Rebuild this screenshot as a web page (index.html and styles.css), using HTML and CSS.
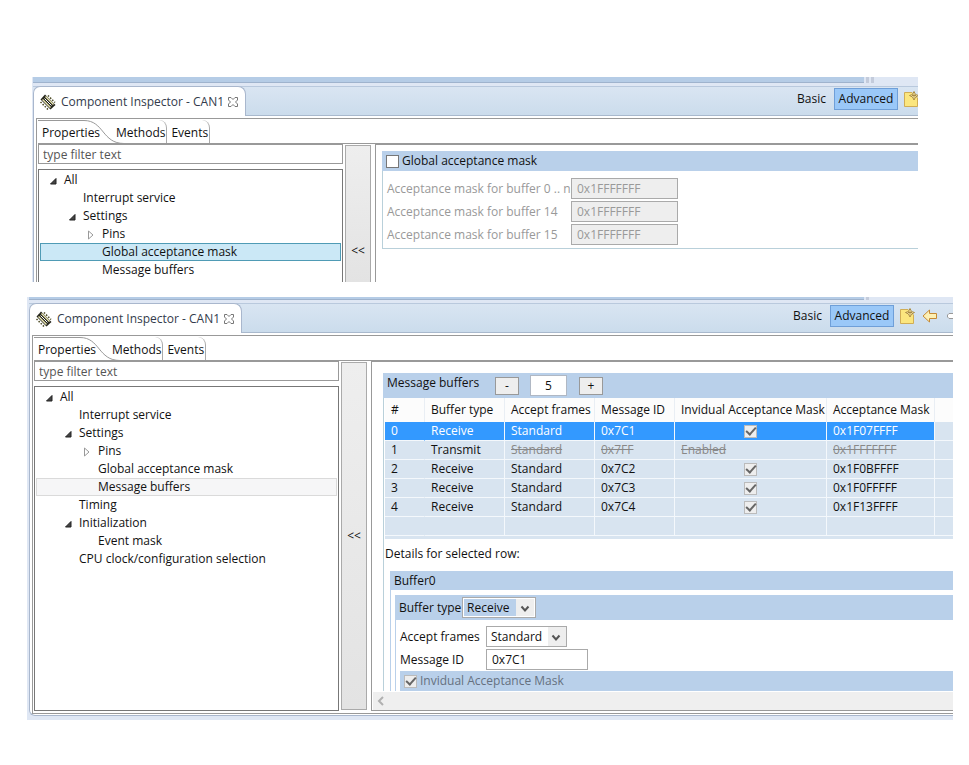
FILE: index.html
```html
<!DOCTYPE html>
<html lang="en">
<head>
  <meta charset="UTF-8">
  <meta name="viewport" content="width=device-width, initial-scale=1.0">
  <title>Component Inspector - CAN1</title>
  <link rel="stylesheet" href="styles.css">
</head>
<body>
  <svg class="defs" width="0" height="0">
    <symbol id="chip" viewBox="0 0 16 16">
      <path d="M0.500 5.500 5 0.500 15.500 11 10.500 15.500Z" fill="#26261c"/>
      <path d="M2.500 5.500 10.500 13.500M5.500 2.500 13.500 10.500" stroke="#e6e3b0" stroke-width="1.500"/>
      <path d="M4.500 4.500 11.500 11.500" stroke="#fff"/>
      <path d="M0.500 8 8 15.500M8 1.500 15 8.500" stroke="#4a4820" stroke-width="1.500" stroke-dasharray="1.500 1.500"/>
    </symbol>
    <symbol id="close" viewBox="0 0 12 12">
      <path d="M1.500 1.500H4L6 3.500 8 1.500H10.500V4L8.500 6 10.500 8V10.500H8L6 8.500 4 10.500H1.500V8L3.500 6 1.500 4Z" fill="#fff" stroke="#777"/>
    </symbol>
    <symbol id="note" viewBox="0 0 16 16">
      <path d="M1.500 1.500H9L14.500 7V15.500H1.500Z" fill="#fbe67e" stroke="#d0ad55"/>
      <path d="M11 0.500 12.500 3.500 15.500 4.500 12.500 6 11 9 9.500 6 6.500 4.500 9.500 3.500Z" fill="#fff3b0" stroke="#a98a44"/>
      <path d="M11 3V6.500M9 4.500H13" stroke="#a98a44"/>
    </symbol>
    <symbol id="back" viewBox="0 0 16 14">
      <path d="M1 7 7.500 1V4.500H14.500V9.500H7.500V13Z" fill="#fdf0b4" stroke="#c68a35"/>
    </symbol>
    <symbol id="open" viewBox="0 0 8 8">
      <path d="M7 1.500V7H1.500Z" fill="#444" stroke="#222"/>
    </symbol>
    <symbol id="closed" viewBox="0 0 8 10">
      <path d="M1.500 1 6 5 1.500 9Z" fill="#fff" stroke="#999"/>
    </symbol>
    <symbol id="chevron" viewBox="0 0 10 8">
      <path d="M1.500 1.500 5 5.500 8.500 1.500" fill="none" stroke="#555" stroke-width="2"/>
    </symbol>
    <symbol id="curve" viewBox="0 0 86 24">
      <path d="M0 0.500H46C66 0.500 64 23.500 86 23.500" fill="none" stroke="#999"/>
    </symbol>
  </svg>

  <main>
    <!-- acceptance mask page -->
    <section class="view view-mask">
      <div class="sash"><i></i><i></i></div>
      <header class="view-bar">
        <div class="view-tab">
          <svg class="chip"><use href="#chip"/></svg>
          <span>Component Inspector - CAN1</span>
          <svg class="close"><use href="#close"/></svg>
        </div>
        <div class="toolbar">
          <button class="mode">Basic</button>
          <button class="mode active">Advanced</button>
          <svg class="note"><use href="#note"/></svg>
        </div>
      </header>
      <div class="view-body">
        <div class="frame">
          <nav class="tabs">
            <button class="tab first">Properties<svg class="curve"><use href="#curve"/></svg></button>
            <button class="tab methods">Methods</button>
            <button class="tab">Events</button>
          </nav>
          <div class="work">
            <div class="side">
              <input class="filter" type="text" placeholder="type filter text" aria-label="Filter">
              <ul class="tree">
                <li><svg class="arrow"><use href="#open"/></svg>All</li>
                <li class="l2">Interrupt service</li>
                <li class="l2"><svg class="arrow"><use href="#open"/></svg>Settings</li>
                <li class="l3"><svg class="arrow closed"><use href="#closed"/></svg>Pins</li>
                <li class="l3 selected">Global acceptance mask</li>
                <li class="l3">Message buffers</li>
              </ul>
            </div>
            <button class="collapse">&lt;&lt;</button>
            <div class="pane">
              <div class="mask-form">
                <div class="bar"><input type="checkbox" id="gmask"><label for="gmask">Global acceptance mask</label></div>
                <div class="mask-grid">
                  <label for="m0">Acceptance mask for buffer 0 .. n</label><input id="m0" class="box" type="text" value="0x1FFFFFFF" disabled>
                  <label for="m14">Acceptance mask for buffer 14</label><input id="m14" class="box" type="text" value="0x1FFFFFFF" disabled>
                  <label for="m15">Acceptance mask for buffer 15</label><input id="m15" class="box" type="text" value="0x1FFFFFFF" disabled>
                </div>
              </div>
            </div>
          </div>
        </div>
      </div>
    </section>

    <!-- message buffers page -->
    <section class="view view-buffers">
      <div class="sash"><i></i></div>
      <header class="view-bar">
        <div class="view-tab">
          <svg class="chip"><use href="#chip"/></svg>
          <span>Component Inspector - CAN1</span>
          <svg class="close"><use href="#close"/></svg>
        </div>
        <div class="toolbar">
          <button class="mode">Basic</button>
          <button class="mode active">Advanced</button>
          <svg class="note"><use href="#note"/></svg>
          <svg class="back"><use href="#back"/></svg>
          <svg class="forward" viewBox="0 0 6 14"><path d="M7 4.500H2L0.500 6V8L2 9.500H7" fill="#fff" stroke="#999"/></svg>
        </div>
      </header>
      <div class="view-body">
        <div class="frame">
          <nav class="tabs">
            <button class="tab first">Properties<svg class="curve"><use href="#curve"/></svg></button>
            <button class="tab methods">Methods</button>
            <button class="tab">Events</button>
          </nav>
          <div class="work">
            <div class="side">
              <input class="filter" type="text" placeholder="type filter text" aria-label="Filter">
              <ul class="tree">
                <li><svg class="arrow"><use href="#open"/></svg>All</li>
                <li class="l2">Interrupt service</li>
                <li class="l2"><svg class="arrow"><use href="#open"/></svg>Settings</li>
                <li class="l3"><svg class="arrow closed"><use href="#closed"/></svg>Pins</li>
                <li class="l3">Global acceptance mask</li>
                <li class="l3 inactive">Message buffers</li>
                <li class="l2">Timing</li>
                <li class="l2"><svg class="arrow"><use href="#open"/></svg>Initialization</li>
                <li class="l3">Event mask</li>
                <li class="l2">CPU clock/configuration selection</li>
              </ul>
            </div>
            <button class="collapse">&lt;&lt;</button>
            <div class="pane">
              <div class="buffers">
                <div class="bar count">
                  <label for="count">Message buffers</label>
                  <button class="step">-</button>
                  <input id="count" type="text" value="5">
                  <button class="step">+</button>
                </div>
                <table>
                  <colgroup><col class="c-num"><col class="c-type"><col class="c-frames"><col class="c-id"><col class="c-ind"><col class="c-mask"><col></colgroup>
                  <thead>
                    <tr><th>#</th><th>Buffer type</th><th>Accept frames</th><th>Message ID</th><th>Invidual Acceptance Mask</th><th>Acceptance Mask</th><th></th></tr>
                  </thead>
                  <tbody>
                    <tr class="current"><td>0</td><td>Receive</td><td>Standard</td><td>0x7C1</td><td class="tick"><input type="checkbox" aria-label="Mask 0" checked disabled></td><td>0x1F07FFFF</td><td></td></tr>
                    <tr><td>1</td><td>Transmit</td><td><s>Standard</s></td><td><s>0x7FF</s></td><td><s>Enabled</s></td><td><s>0x1FFFFFFF</s></td><td></td></tr>
                    <tr><td>2</td><td>Receive</td><td>Standard</td><td>0x7C2</td><td class="tick"><input type="checkbox" aria-label="Mask 2" checked disabled></td><td>0x1F0BFFFF</td><td></td></tr>
                    <tr><td>3</td><td>Receive</td><td>Standard</td><td>0x7C3</td><td class="tick"><input type="checkbox" aria-label="Mask 3" checked disabled></td><td>0x1F0FFFFF</td><td></td></tr>
                    <tr><td>4</td><td>Receive</td><td>Standard</td><td>0x7C4</td><td class="tick"><input type="checkbox" aria-label="Mask 4" checked disabled></td><td>0x1F13FFFF</td><td></td></tr>
                    <tr><td></td><td></td><td></td><td></td><td></td><td></td><td></td></tr>
                  </tbody>
                </table>
                <div class="table-end"></div>
                <p class="details">Details for selected row:</p>
                <div class="group">
                  <div class="bar">Buffer0</div>
                  <div class="group-inner">
                    <div class="bar type">
                      <label for="btype">Buffer type</label>
                      <span class="combo focused"><select id="btype"><option>Receive</option><option>Transmit</option></select><svg><use href="#chevron"/></svg></span>
                    </div>
                    <div class="fields">
                      <label for="frames">Accept frames</label>
                      <span class="combo"><select id="frames"><option>Standard</option><option>Extended</option></select><svg><use href="#chevron"/></svg></span>
                      <label for="mid">Message ID</label>
                      <input id="mid" class="box" type="text" value="0x7C1">
                    </div>
                    <div class="bar individual"><input type="checkbox" id="ind" checked disabled><label for="ind">Invidual Acceptance Mask</label></div>
                  </div>
                </div>
              </div>
              <div class="scroll"><svg viewBox="0 0 8 10"><path d="M6 1 2 5 6 9" fill="none" stroke="#b0b0b0" stroke-width="2"/></svg></div>
            </div>
          </div>
        </div>
      </div>
    </section>
  </main>
</body>
</html>
```
FILE: styles.css
```css
* {
  margin: 0;
  padding: 0;
  box-sizing: border-box;
}

body {
  background: #fff;
  color: #111;
  font: 12px/18px "Open Sans", "Noto Sans", sans-serif;
}

input, select, button {
  font: inherit;
  color: inherit;
  border-radius: 0;
}

button {
  border: none;
  background: none;
  white-space: nowrap;
}

.defs {
  position: absolute;
}

svg {
  flex: none;
}

main {
  padding: 77px 16px 47px 27px;
  display: flex;
  flex-direction: column;
  gap: 15px;
}

/* view shell */
.view {
  background: #dfe7f4;
  overflow: hidden;
}

.view-mask {
  margin: 0 35px 0 5px;
  padding-left: 1px;
}

.view-buffers {
  padding: 0 0 4px 2px;
}

.sash {
  display: flex;
  gap: 2px;
  height: 6px;
  margin-bottom: 3px;
}

.sash::before {
  content: "";
  flex: 1;
  background: #b5cce6;
  border-bottom: 1px solid #9fb3cd;
}

.sash i {
  width: 3px;
  background: #c3cbdb;
}

.view-mask .sash {
  padding-right: 44px;
}

.view-buffers .sash {
  height: 3px;
  padding-right: 84px;
}

.view-bar {
  display: flex;
  justify-content: space-between;
  height: 30px;
  background: linear-gradient(#d9e5f2, #cbdcec);
  border-top: 1px solid #b9c9dd;
  border-bottom: 1px solid #a9b9cd;
}

.view-tab {
  display: flex;
  align-items: center;
  width: 213px;
  height: 30px;
  margin-top: -1px;
  padding: 1px 6px 0 6px;
  background: #fff;
  border: 1px solid #a9b7cd;
  border-bottom: none;
  border-radius: 7px 8px 0 0;
  color: #333b4c;
  white-space: nowrap;
}

.view-tab span {
  flex: 1;
  margin-left: 5px;
}

.chip {
  width: 16px;
  height: 16px;
}

.close {
  width: 12px;
  height: 12px;
}

.toolbar {
  display: flex;
  align-items: flex-start;
  padding-top: 1px;
}

.mode {
  height: 22px;
  padding: 0 8px;
}

.mode.active {
  width: 64px;
  padding: 0 2px;
  background: #9ac8f8;
  border: 1px solid #6f9fd8;
}

.note {
  width: 16px;
  height: 16px;
  margin: 3px 0 0 5px;
}

.view-mask .note {
  margin-right: -1px;
}

.back {
  width: 16px;
  height: 14px;
  margin: 4px 0 0 7px;
}

.forward {
  width: 6px;
  height: 14px;
  margin: 4px 0 0 9px;
}

.view-body {
  padding: 2px 0 0 2px;
  background: #fff;
  border-left: 1px solid #a9b7cd;
}

.view-buffers .view-body {
  padding-bottom: 1px;
  border-bottom: 1px solid #a9b7cd;
  border-bottom-left-radius: 6px;
}

.frame {
  padding-left: 1px;
  border-top: 1px solid #999;
  border-left: 1px solid #999;
}

.view-buffers .frame {
  padding-bottom: 2px;
  border-bottom: 1px solid #999;
}

/* Properties / Methods / Events */
.tabs {
  display: flex;
  height: 25px;
  border-bottom: 1px solid #999;
}

.tab {
  height: 23px;
  margin-top: 1px;
  padding: 2px 1px 0 4px;
  border-right: 1px solid #aaa;
  border-top-right-radius: 8px;
}

.tab.first {
  position: relative;
  width: 62px;
  padding-right: 0;
  border-right: none;
  border-radius: 0;
  text-align: left;
}

.tab.methods {
  padding-left: 16px;
}

.curve {
  position: absolute;
  left: 0;
  top: 0;
  width: 86px;
  height: 24px;
}

.work {
  display: flex;
}

.side {
  display: flex;
  flex-direction: column;
  flex: none;
  width: 305px;
}

.filter {
  height: 20px;
  margin-bottom: 5px;
  padding: 0 4px;
  border: 1px solid #999;
}

.filter::placeholder {
  color: #555;
  opacity: 1;
}

.tree {
  flex: 1;
  padding: 1px 1px 3px;
  border: 1px solid #777;
  list-style: none;
}

.view-mask .tree {
  border-bottom: none;
}

.tree li {
  padding-left: 24px;
  white-space: nowrap;
}

.tree .l2 {
  padding-left: 43px;
}

.tree .l3 {
  padding-left: 62px;
}

.arrow {
  width: 8px;
  height: 8px;
  margin: 0 7px 0 -15px;
  vertical-align: -1px;
}

.arrow.closed {
  height: 10px;
  vertical-align: -2px;
}

.tree .selected {
  background: #cbe8f6;
  box-shadow: inset 0 0 0 1px #4f9bb5;
}

.tree .inactive {
  background: #f6f6f7;
  box-shadow: inset 0 0 0 1px #dadada;
}

.collapse {
  width: 26px;
  margin: 1px 4px 0 2px;
  background: linear-gradient(#eee, #e3e3e3);
  border: 1px solid #aaa;
}

.view-mask .collapse {
  display: flex;
  align-items: flex-end;
  justify-content: center;
  padding-bottom: 22px;
  border-bottom: none;
}

.view-buffers .collapse {
  margin-bottom: 1px;
}

.pane {
  flex: 1;
  min-width: 0;
  border-top: 1px solid #999;
  border-left: 1px solid #999;
}

.view-buffers .pane {
  border-bottom: 1px solid #999;
}

.bar {
  display: flex;
  align-items: center;
  height: 20px;
  padding-left: 4px;
  background: #b9d0ea;
}

/* check boxes */
input[type="checkbox"] {
  display: grid;
  place-items: center;
  appearance: none;
  flex: none;
  width: 13px;
  height: 13px;
  background: #fff;
  border: 1px solid #777;
}

input[type="checkbox"]:disabled {
  background: #eee;
  border-color: #bbb;
}

input[type="checkbox"]:checked::after {
  content: "";
  width: 4px;
  height: 8px;
  margin-top: -2px;
  border: solid #666;
  border-width: 0 2px 2px 0;
  transform: rotate(42deg);
}

.bar label {
  margin-left: 3px;
}

/* mask form */
.mask-form {
  margin: 6px 0 0 6px;
}

.mask-grid {
  display: grid;
  grid-template-columns: 184px 107px;
  row-gap: 2px;
  padding: 7px 0 3px 4px;
  border-left: 1px solid #b9d0da;
  border-bottom: 1px solid #b9d0da;
  color: #999;
  line-height: 21px;
  white-space: nowrap;
}

.box {
  height: 21px;
  padding: 0 5px;
  background: #fff;
  border: 1px solid #aaa;
}

.box:disabled {
  background: #eee;
}

/* message buffers */
.buffers {
  margin: 11px 0 0 11px;
  border-left: 1px solid #b9d0da;
}

.count {
  height: 25px;
  margin-left: -1px;
}

.count label {
  width: 108px;
  height: 23px;
  margin: 0;
}

.step {
  width: 24px;
  height: 18px;
  background: #eee;
  border: 1px solid #999;
  line-height: 16px;
}

.count input {
  width: 37px;
  height: 21px;
  margin: 0 12px 0 11px;
  border: 1px solid #b0b8c4;
  text-align: center;
}

table {
  width: calc(100% - 1px);
  margin-left: 1px;
  table-layout: fixed;
  border-collapse: separate;
  border-spacing: 0;
}

.c-num {
  width: 40px;
}

.c-type, .c-id {
  width: 80px;
}

.c-frames {
  width: 90px;
}

.c-ind {
  width: 152px;
}

.c-mask {
  width: 108px;
}

th {
  height: 24px;
  padding-left: 6px;
  background: #fcfcfc;
  border-right: 1px solid #e9eef4;
  font-weight: normal;
  text-align: left;
  white-space: nowrap;
}

td {
  height: 19px;
  padding-left: 6px;
  background: #d8e4f0;
  border-right: 1px solid #f4f8fc;
  border-bottom: 1px solid #f4f8fc;
  white-space: nowrap;
}

td:first-child {
  border-right-color: #d8e4f0;
}

th:last-child, td:last-child {
  border-right: none;
}

.current td:not(:last-child) {
  background: #3399ff;
  color: #fff;
}

.current td:first-child {
  border-right-color: #3399ff;
}

td s {
  color: #888;
}

.tick {
  padding: 0;
}

.tick input {
  margin: 0 auto;
}

.table-end {
  height: 3px;
  margin-left: 1px;
  background: #d8e4f0;
}

.details {
  padding: 6px 0 8px 1px;
}

.group {
  margin-left: 6px;
  border-left: 1px solid #b9d0ea;
}

.group > .bar {
  height: 19px;
  padding-left: 3px;
}

.group-inner {
  margin: 5px 0 0 4px;
  border-left: 1px solid #b9d0ea;
}

.type {
  height: 25px;
  padding-left: 0;
}

.type label {
  width: 63px;
  white-space: nowrap;
}

.combo {
  position: relative;
  display: flex;
  width: 81px;
  height: 21px;
  background: #fff;
  border: 1px solid #aaa;
}

.combo select {
  appearance: none;
  width: 100%;
  padding-left: 4px;
  background: linear-gradient(#eee, #eee) right / 18px 100% no-repeat;
  border: none;
  line-height: 16px;
}

.combo svg {
  position: absolute;
  right: 5px;
  top: 7px;
  width: 10px;
  height: 8px;
  pointer-events: none;
}

.focused {
  width: 74px;
  padding: 1px;
}

.focused select {
  padding-left: 3px;
  background-color: #b9d0ea;
}

.fields {
  display: grid;
  grid-template-columns: 86px 102px;
  row-gap: 2px;
  padding: 6px 0 1px 4px;
  line-height: 21px;
}

.individual {
  margin-left: 4px;
  color: #667080;
}

.individual label {
  margin-left: 3px;
}

.scroll {
  display: flex;
  align-items: center;
  height: 18px;
  margin: 1px 0 0 1px;
  padding-left: 4px;
  background: #efefef;
}

.scroll svg {
  width: 8px;
  height: 10px;
}
```
